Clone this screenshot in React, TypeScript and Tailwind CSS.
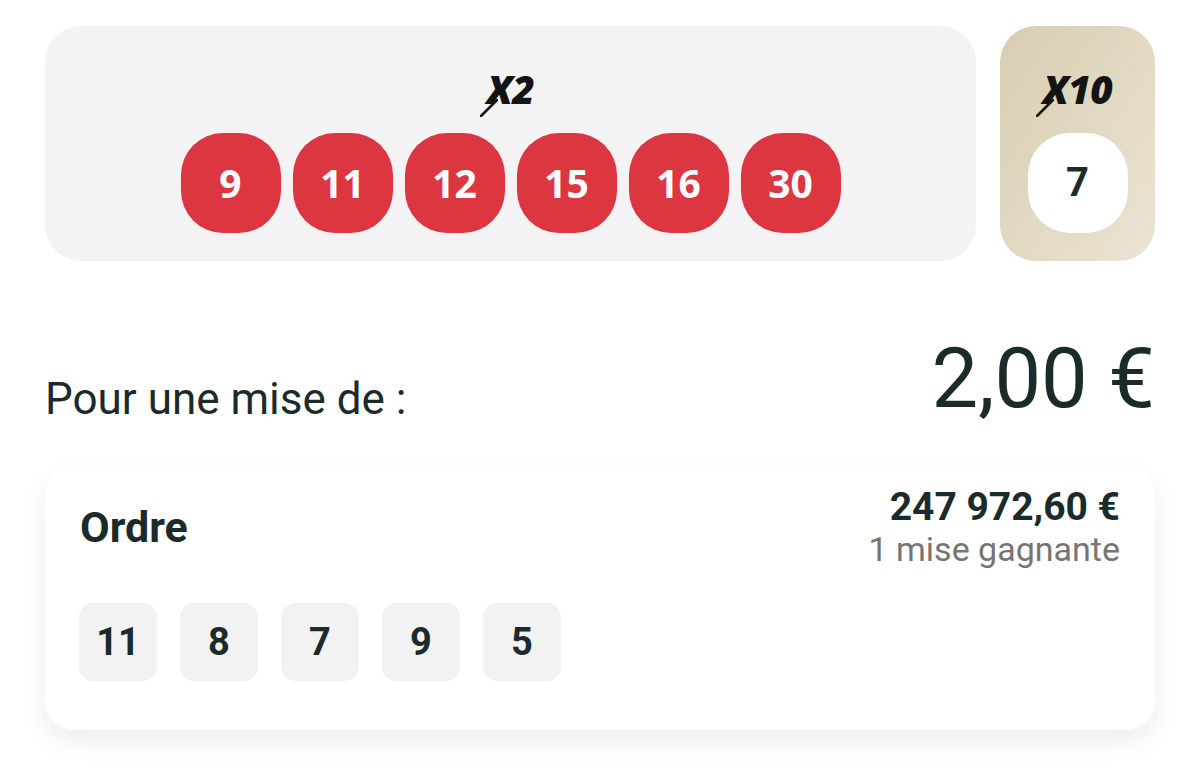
import React from 'react';

const DRAWN = [9, 11, 12, 15, 16, 30];
const ORDER = [11, 8, 7, 9, 5];

// Multiplier label: italic heavy "X" with the long tail stroke on its first leg
function Multiplier({ value }: { value: string }) {
  return (
    <div className="flex items-center justify-center h-[48px]">
      <span className="font-['Open_Sans',sans-serif] italic font-extrabold text-[39px] leading-none text-[#141414] tracking-[-0.5px]">
        <span className="relative inline-block">
          X
          <svg
            className="absolute left-[-7px] bottom-[-9px] w-[18px] h-[18px]"
            viewBox="0 0 18 18"
          >
            <line x1="17" y1="1" x2="1" y2="17" stroke="#141414" strokeWidth="2.5" strokeLinecap="round" />
          </svg>
        </span>
        {value}
      </span>
    </div>
  );
}

export default function App() {
  return (
    <div className="min-h-screen w-[1200px] bg-white font-['Roboto',sans-serif] text-[#1b2a2a]">
      <div className="px-[45px] pt-[26px]">
        {/* Draw results */}
        <div className="flex gap-[24px]">
          <div className="flex-1 h-[235px] rounded-[36px] bg-[#f3f3f3] flex flex-col items-center pt-[38px]">
            <Multiplier value="2" />
            <div className="mt-[21px] flex gap-[12px]">
              {DRAWN.map((n) => (
                <div
                  key={n}
                  className="w-[100px] h-[100px] rounded-[42px] bg-[#dc3641] flex items-center justify-center text-white font-['Open_Sans',sans-serif] font-bold text-[39px]"
                >
                  {n}
                </div>
              ))}
            </div>
          </div>
          <div className="w-[155px] h-[235px] rounded-[36px] bg-gradient-to-br from-[#d8cdb1] to-[#ebe4d3] flex flex-col items-center pt-[38px]">
            <Multiplier value="10" />
            <div className="mt-[21px] w-[100px] h-[100px] rounded-[42px] bg-white flex items-center justify-center font-bold text-[40px]">
              7
            </div>
          </div>
        </div>

        {/* Stake */}
        <div className="mt-[76px] flex items-baseline justify-between">
          <span className="text-[44px] translate-y-[7px]">Pour une mise de :</span>
          <span className="text-[83px] leading-none">2,00 €</span>
        </div>

        {/* Winnings card */}
        <div className="mt-[40px] rounded-[28px] bg-white shadow-[0_12px_26px_rgba(0,0,0,0.07)] px-[35px] pt-[20px] pb-[49px]">
          <div className="flex justify-between">
            <span className="font-bold text-[43px] mt-[17px] leading-[50px] h-[50px]">Ordre</span>
            <div className="flex flex-col items-end">
              <span className="font-bold text-[39px] leading-[44px]">247 972,60 €</span>
              <span className="text-[34px] leading-[40px] text-[#757575]">1 mise gagnante</span>
            </div>
          </div>
          <div className="mt-[34px] -ml-px flex gap-[23px]">
            {ORDER.map((n) => (
              <div
                key={n}
                className="w-[78px] h-[78px] rounded-[14px] bg-[#f3f2f3] flex items-center justify-center font-bold text-[38px]"
              >
                {n}
              </div>
            ))}
          </div>
        </div>
      </div>
    </div>
  );
}
